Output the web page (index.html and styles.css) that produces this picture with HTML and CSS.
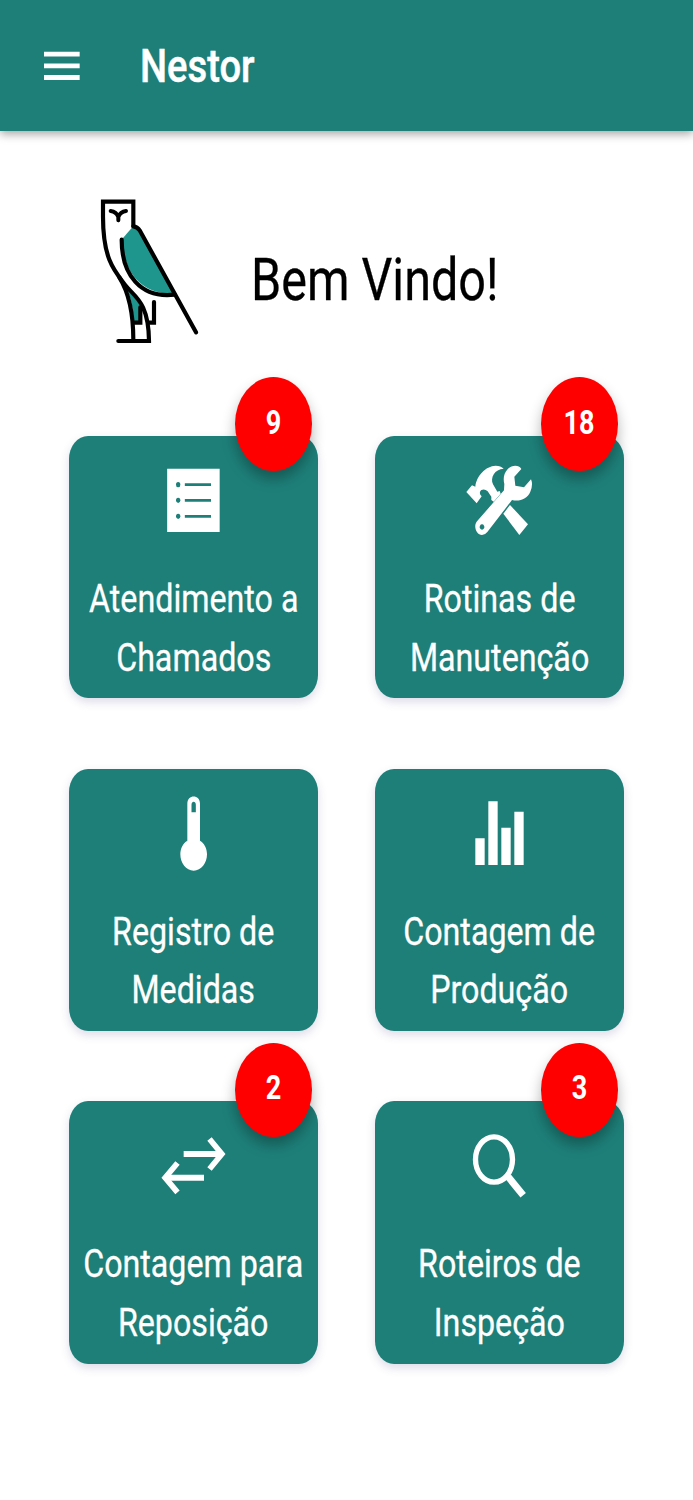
FILE: index.html
```html
<!DOCTYPE html>
<html lang="pt-BR">
<head>
    <meta charset="utf-8">
    <title>Nestor</title>
    <link rel="stylesheet" href="styles.css">
</head>
<body>

<header class="toolbar">
    <svg class="menu" viewBox="0 0 108 90">
        <path d="M0 9.500H107M0 44.500H107M0 79.500H107" stroke="#fff" stroke-width="14.500"/>
    </svg>
    <h1 class="title">Nestor</h1>
</header>

<main>
    <div class="welcome">
        <svg class="owl" viewBox="0 0 420 540" fill="none" stroke="#000" stroke-width="12.500" stroke-linecap="round">
            <path d="M157 142L129 174C126 270 180 345 283 341L178 145Z" fill="#1f968d" stroke="none"/>
            <path d="M140 328C158 346 172 362 181 377V428H161C160 390 154 354 140 328Z" fill="#1f968d" stroke="none"/>
            <path d="M160 138V65H69V110C69 240 105 275 138 318C163 350 206 365 207 483H115"/>
            <path d="M160 139Q172 140 179 151L348 457"/>
            <path d="M125 179C125 285 182 356 284 344"/>
            <path d="M118 292C145 335 160 400 160 480"/>
            <path d="M181 382V428H164M222 366V428H204"/>
            <path d="M92 93Q109 95 115 111Q121 95 138 93M115 108V121" stroke-width="12"/>
        </svg>
        <p class="greeting">Bem Vindo!</p>
    </div>

    <div class="cards">
        <a class="card">
            <span class="badge"><b>9</b></span>
            <svg class="icon" viewBox="0 0 300 300">
                <path d="M72.500 56H230V246H72.500Z" fill="#fff"/>
                <g fill="#1e7f79">
                    <ellipse cx="105.500" cy="104" rx="6.500" ry="8"/>
                    <ellipse cx="105.500" cy="151" rx="6.500" ry="8"/>
                    <ellipse cx="105.500" cy="199" rx="6.500" ry="8"/>
                </g>
                <path d="M125.500 104H204M125.500 151H204M125.500 199H204" stroke="#1e7f79" stroke-width="8"/>
            </svg>
            <span class="label">Atendimento a<br>Chamados</span>
        </a>

        <a class="card">
            <span class="badge"><b>18</b></span>
            <svg class="icon" viewBox="-2 0 300 300">
                <g fill="#fff">
                    <path d="M50 126L67 106L77 110C80 78 108 48 138 47Q153 47 162 56C135 57 121 83 130 103L143 125L150 123L153 131L132 155L125 150V140L114 124Q105 115 95 120Q88 126 92 134L96 139L81 160Z"/>
                    <path d="M181 165L235 223L209 255L161 191Z"/>
                    <path fill-rule="evenodd" d="M215 57C208 44 188 44 175 56C162 69 160 86 164 102L163 121L82 214C70 229 80 255 97 255Q106 255 113 246L187 150C209 156 234 146 242 125Q251 104 244 88L223 112L197 107L194 80ZM97 223a7 8 0 1 0 .1 0Z"/>
                </g>
            </svg>
            <span class="label">Rotinas de<br>Manutenção</span>
        </a>

        <a class="card">
            <svg class="icon" viewBox="-1.500 0 300 300">
                <path fill="#fff" fill-rule="evenodd" d="M131.500 62C131.500 33 169.500 33 169.500 62V173C182 180 190.500 196 190.500 214C190.500 241 173 263 150.500 263S110.500 241 110.500 214C110.500 196 119 180 131.500 173ZM144 88H157V65C157 53 144 53 144 65Z"/>
            </svg>
            <span class="label">Registro de<br>Medidas</span>
        </a>

        <a class="card">
            <svg class="icon" viewBox="-1.500 1 300 300">
                <path fill="#fff" d="M77.500 167h28v80h-28ZM116.500 56h28v191h-28ZM155.500 135h28v112h-28ZM194.500 87h28v160h-28Z"/>
            </svg>
            <span class="label">Contagem de<br>Produção</span>
        </a>

        <a class="card">
            <span class="badge"><b>2</b></span>
            <svg class="icon" viewBox="-1.500 -1 300 300" fill="none" stroke="#fff">
                <path d="M120.500 116H232M181.500 187H68" stroke-width="18"/>
                <path d="M198 71L235 116L198 161M102 143L65 187L102 231" stroke-width="17"/>
            </svg>
            <span class="label">Contagem para<br>Reposição</span>
        </a>

        <a class="card">
            <span class="badge"><b>3</b></span>
            <svg class="icon" viewBox="-1.500 -1.500 300 300" fill="none" stroke="#fff">
                <ellipse cx="133.500" cy="132" rx="55.500" ry="68" stroke-width="16"/>
                <path d="M176 184L221 239" stroke-width="21"/>
            </svg>
            <span class="label">Roteiros de<br>Inspeção</span>
        </a>
    </div>
</main>

</body>
</html>
```
FILE: styles.css
```css
* { box-sizing: border-box; }
body { margin: 0; min-height: 1500px; background: #fff; font-family: Roboto, sans-serif; }

.toolbar { display: flex; align-items: center; height: 131px; padding-left: 44px; background: #1e7f79; box-shadow: 0 3px 9px rgba(0,0,0,.36); }
.menu { width: 36px; height: 30px; }
.title { margin: 1px 0 0 59.500px; color: #fff; font-size: 46px; font-weight: 500; line-height: 54px; transform: scaleX(.83); transform-origin: left; -webkit-text-stroke: .5px #fff; }

.welcome { display: flex; height: 305px; padding: 49px 0 0 80px; }
.owl { width: 140px; height: 180px; }
.greeting { margin: 70px 0 0 31px; font-size: 59px; line-height: 60px; white-space: nowrap; transform: scaleX(.822); transform-origin: left; -webkit-text-stroke: .3px #000; }

.cards { display: grid; grid-template-columns: 248.400px 248.400px; grid-auto-rows: 262.300px; gap: 70.400px 57.500px; padding: 0 69.300px; }
.card { position: relative; display: flex; flex-direction: column; align-items: center; padding-top: 14px; border-radius: 19px / 23px; background: #1e7f79; color: #fff; box-shadow: 0 4px 10px rgba(60,40,120,.17); }
.icon { width: 100px; height: 100px; flex: none; }
.label { margin-top: 20px; font-size: 39px; line-height: 58.500px; text-align: center; white-space: nowrap; transform: scaleX(.826); -webkit-text-stroke: .3px #fff; }

/* counter of pending items */
.badge { position: absolute; top: -58.700px; right: 6px; display: flex; align-items: center; justify-content: center; width: 77px; height: 94px; padding-bottom: 4px; border-radius: 50%; background: red; font-size: 33px; box-shadow: 0 8px 14px rgba(0,0,0,.3); }
.badge b { transform: scaleX(.82); }
```
